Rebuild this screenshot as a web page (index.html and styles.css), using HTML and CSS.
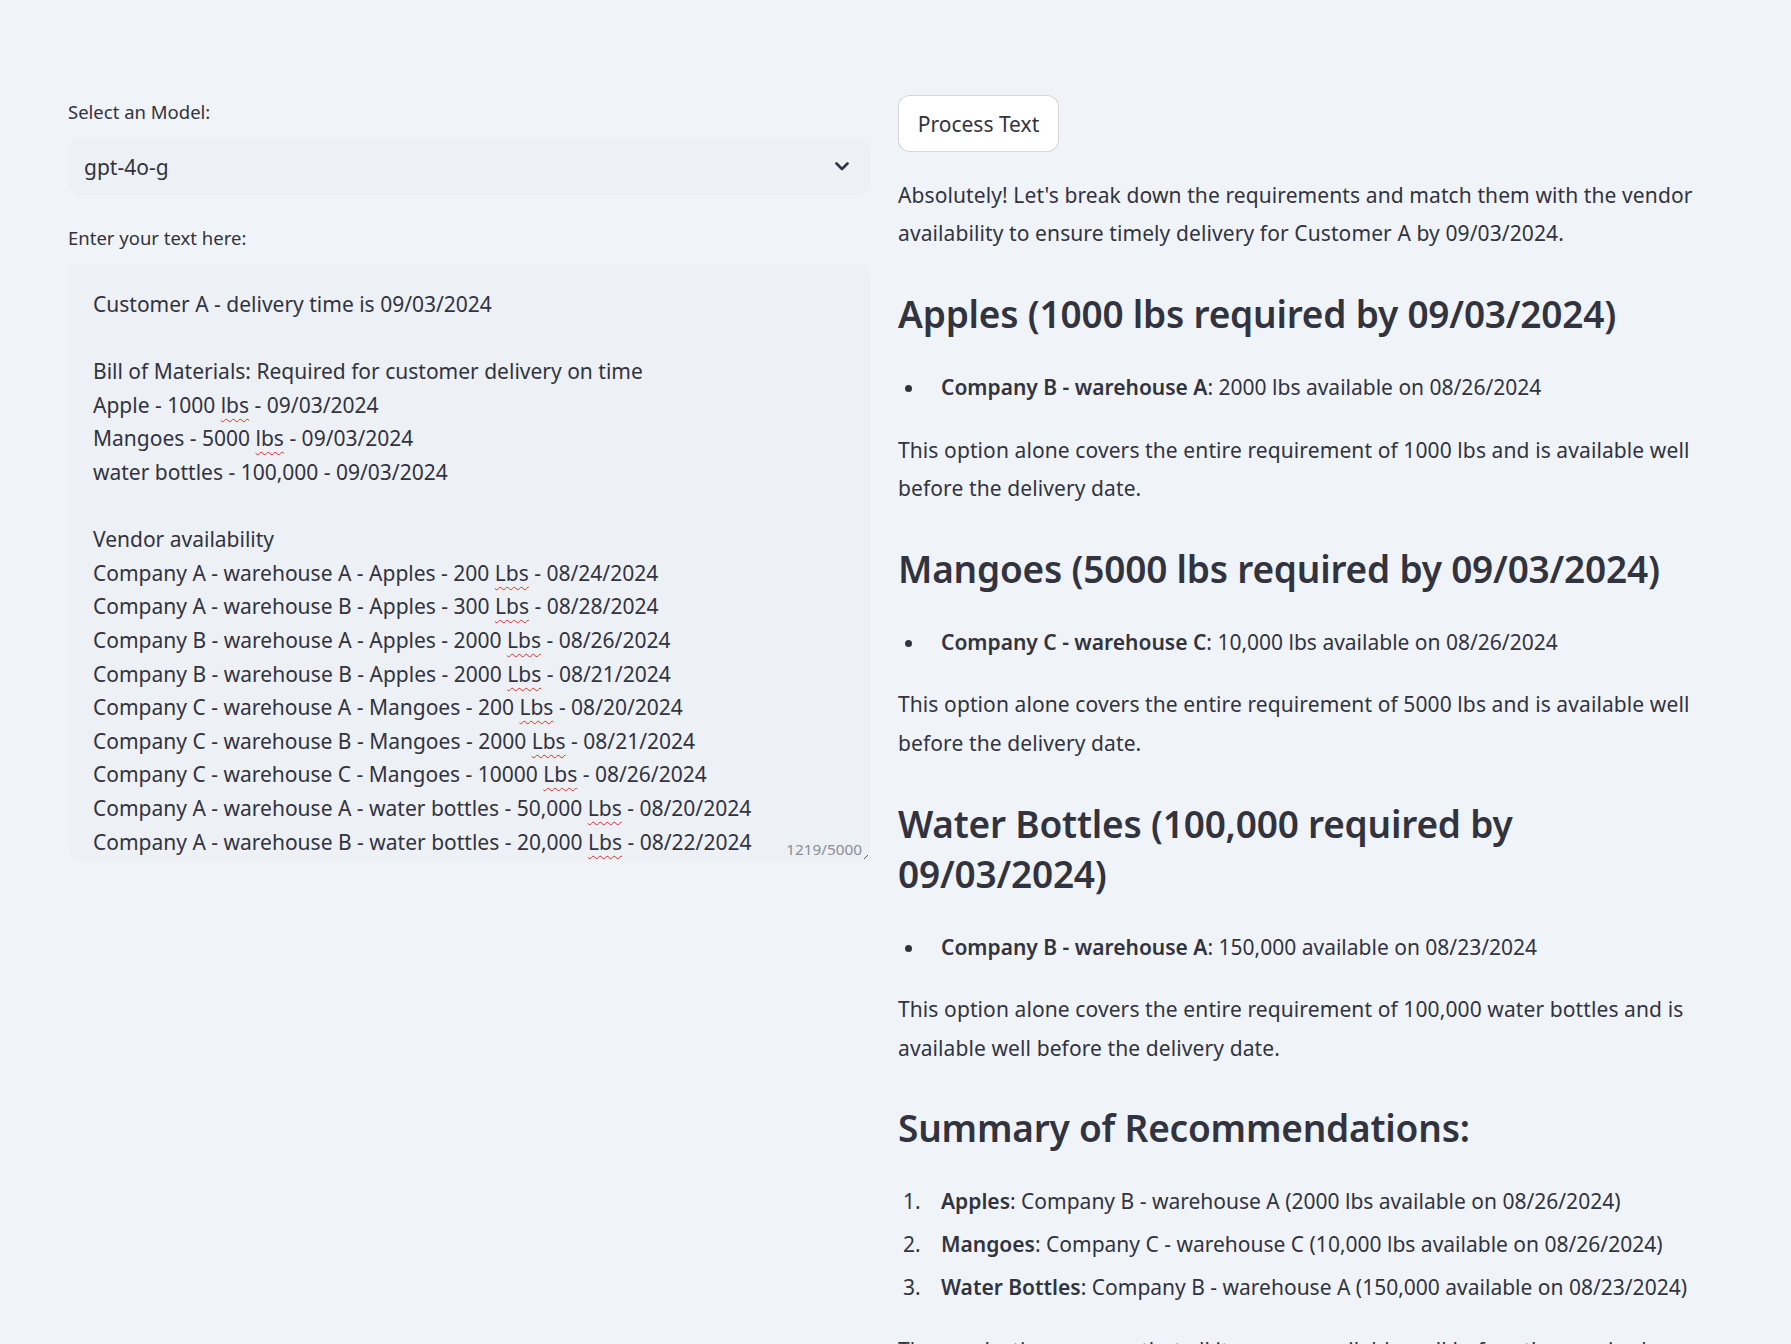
FILE: index.html
```html
<!DOCTYPE html>
<html lang="en">
<head>
<meta charset="utf-8">
<title>Vendor Matching</title>
<link rel="stylesheet" href="styles.css">
</head>
<body>
<main class="app">
  <section class="col col-left">
    <label class="field-label">Select an Model:</label>
    <div class="select">
      <span class="select-value">gpt-4o-g</span>
      <svg class="chevron" width="14" height="9" viewBox="0 0 14 9"><path d="M1.5 1.5 L7 7 L12.5 1.5" fill="none" stroke="#31333f" stroke-width="2.6" stroke-linecap="round" stroke-linejoin="round"/></svg>
    </div>
    <label class="field-label field-label-2">Enter your text here:</label>
    <div class="textarea">
      <div class="textarea-content">
        <div class="ln">Customer A - delivery time is 09/03/2024</div>
        <div class="ln blank"></div>
        <div class="ln">Bill of Materials: Required for customer delivery on time</div>
        <div class="ln">Apple - 1000 <span class="sp">lbs</span> - 09/03/2024</div>
        <div class="ln">Mangoes - 5000 <span class="sp">lbs</span> - 09/03/2024</div>
        <div class="ln">water bottles - 100,000 - 09/03/2024</div>
        <div class="ln blank"></div>
        <div class="ln">Vendor availability</div>
        <div class="ln">Company A - warehouse A - Apples - 200 <span class="sp">Lbs</span> - 08/24/2024</div>
        <div class="ln">Company A - warehouse B - Apples - 300 <span class="sp">Lbs</span> - 08/28/2024</div>
        <div class="ln">Company B - warehouse A - Apples - 2000 <span class="sp">Lbs</span> - 08/26/2024</div>
        <div class="ln">Company B - warehouse B - Apples - 2000 <span class="sp">Lbs</span> - 08/21/2024</div>
        <div class="ln">Company C - warehouse A - Mangoes - 200 <span class="sp">Lbs</span> - 08/20/2024</div>
        <div class="ln">Company C - warehouse B - Mangoes - 2000 <span class="sp">Lbs</span> - 08/21/2024</div>
        <div class="ln">Company C - warehouse C - Mangoes - 10000 <span class="sp">Lbs</span> - 08/26/2024</div>
        <div class="ln">Company A - warehouse A - water bottles - 50,000 <span class="sp">Lbs</span> - 08/20/2024</div>
        <div class="ln">Company A - warehouse B - water bottles - 20,000 <span class="sp">Lbs</span> - 08/22/2024</div>
      </div>
      <span class="counter">1219/5000</span>
      <svg class="resize" width="6" height="6" viewBox="0 0 6 6"><path d="M1 5 L5 1" stroke="#555" stroke-width="1"/></svg>
    </div>
  </section>

  <section class="col col-right">
    <button class="btn">Process Text</button>
    <div class="markdown">
      <p>Absolutely! Let's break down the requirements and match them with the vendor availability to ensure timely delivery for Customer A by 09/03/2024.</p>

      <h3>Apples (1000 lbs required by 09/03/2024)</h3>
      <ul>
        <li><strong>Company B - warehouse A</strong>: 2000 lbs available on 08/26/2024</li>
      </ul>
      <p>This option alone covers the entire requirement of 1000 lbs and is available well before the delivery date.</p>

      <h3>Mangoes (5000 lbs required by 09/03/2024)</h3>
      <ul>
        <li><strong>Company C - warehouse C</strong>: 10,000 lbs available on 08/26/2024</li>
      </ul>
      <p>This option alone covers the entire requirement of 5000 lbs and is available well before the delivery date.</p>

      <h3>Water Bottles (100,000 required by 09/03/2024)</h3>
      <ul>
        <li><strong>Company B - warehouse A</strong>: 150,000 available on 08/23/2024</li>
      </ul>
      <p>This option alone covers the entire requirement of 100,000 water bottles and is available well before the delivery date.</p>

      <h3>Summary of Recommendations:</h3>
      <ol>
        <li><strong>Apples</strong>: Company B - warehouse A (2000 lbs available on 08/26/2024)</li>
        <li><strong>Mangoes</strong>: Company C - warehouse C (10,000 lbs available on 08/26/2024)</li>
        <li><strong>Water Bottles</strong>: Company B - warehouse A (150,000 available on 08/23/2024)</li>
      </ol>
      <p>These selections ensure that all items are available well before the required delivery date.</p>
    </div>
  </section>
</main>
</body>
</html>
```

FILE: styles.css
```css
html, body {
  margin: 0;
  height: 1344px;
  overflow: hidden;
}
body {
  background: #f0f3f8;
  color: #31333f;
  font-family: "Noto Sans", "Lato", sans-serif;
  font-size: 21px;
}
.app {
  display: grid;
  grid-template-columns: 802px 802px;
  column-gap: 28px;
  padding: 95px 0 0 68px;
  align-items: start;
}
.col {
  display: flex;
  flex-direction: column;
  min-width: 0;
}
.field-label {
  font-size: 18.5px;
  line-height: 34px;
  margin-bottom: 9px;
}
.field-label-2 {
  margin-top: 26px;
}
.select {
  height: 57px;
  background: #edf0f4;
  border-radius: 12px;
  display: flex;
  align-items: center;
  justify-content: space-between;
  padding: 0 21px 0 16px;
}
.select-value {
  font-size: 21px;
}
.chevron {
  display: block;
}
.textarea {
  position: relative;
  height: 597px;
  box-sizing: border-box;
  background: #edf0f4;
  border-radius: 12px;
  padding: 24px 24px 0 25px;
  overflow: hidden;
}
.textarea-content {
  font-size: 21px;
}
.ln {
  line-height: 33.6px;
  white-space: pre;
}
.ln.blank {
  height: 33.6px;
}
.sp {
  text-decoration: underline wavy #d93025;
  text-decoration-thickness: 1px;
  text-underline-offset: 5px;
}
.counter {
  position: absolute;
  right: 8px;
  bottom: 2px;
  font-size: 15.3px;
  color: #8a8c96;
}
.resize {
  position: absolute;
  right: 1px;
  bottom: 1px;
}
.btn {
  align-self: flex-start;
  width: 161px;
  height: 57px;
  background: #ffffff;
  border: 1px solid rgba(49, 51, 63, 0.2);
  border-radius: 12px;
  font-family: inherit;
  font-size: 21px;
  color: #31333f;
  padding: 0;
}
.markdown {
  margin-top: 24px;
  line-height: 38.4px;
}
.markdown p {
  margin: 0 0 24px;
  letter-spacing: 0.1px;
}
.markdown h3 {
  font-size: 37px;
  line-height: 50px;
  font-weight: 600;
  letter-spacing: -0.2px;
  margin: 0 0 29px;
  padding-top: 12.5px;
}
.markdown ul,
.markdown ol {
  margin: 0 0 24px;
  padding-left: 28px;
}
.markdown ol {
  margin-bottom: 25px;
}
.markdown li {
  padding-left: 15px;
}
.markdown li + li {
  margin-top: 4.4px;
}
.markdown strong {
  font-weight: 600;
}
```
